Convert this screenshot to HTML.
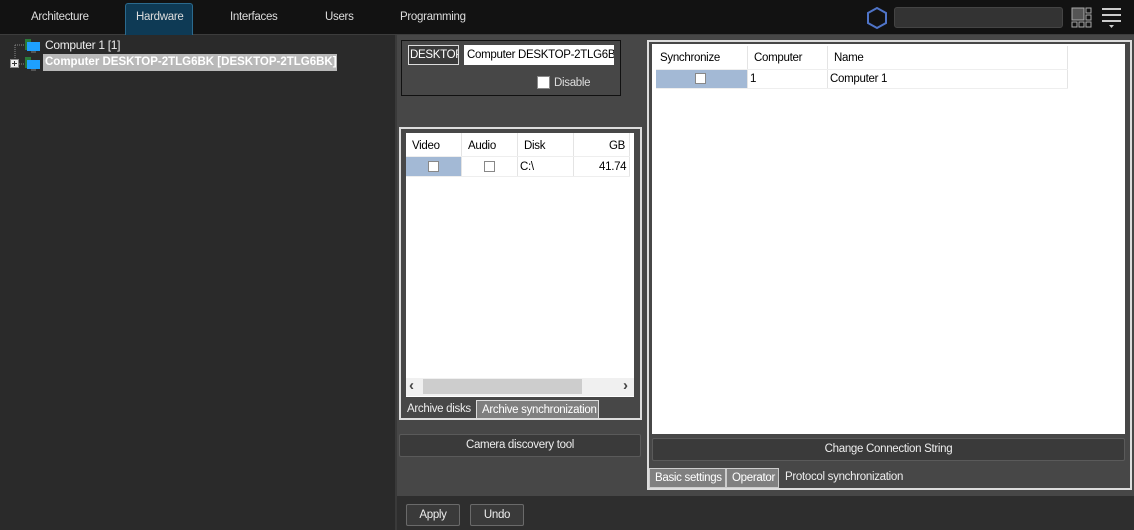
<!DOCTYPE html>
<html><head><meta charset="utf-8"><style>
*{margin:0;padding:0;box-sizing:border-box}
body{width:1134px;height:530px;overflow:hidden;background:#2a2a2a;font-family:"Liberation Sans",sans-serif;font-size:11.5px;letter-spacing:-0.3px;position:relative;color:#fff}
.a{position:absolute;white-space:nowrap;line-height:17px}
</style></head><body>
<div class="a" style="left:0;top:0;width:1134px;height:34px;background:#121212"></div>
<div class="a" style="left:0;top:34px;width:1134px;height:1px;background:#3c3c3c"></div>
<div class="a" style="left:125px;top:3px;width:68px;height:32px;background:#0e3a55;border:1px solid #2b6a8e;border-bottom:none;border-radius:3px 3px 0 0"></div>
<div class="a" style="left:31px;top:9px;color:#ddd">Architecture</div>
<div class="a" style="left:136px;top:9px;color:#ddd">Hardware</div>
<div class="a" style="left:230px;top:9px;color:#ddd">Interfaces</div>
<div class="a" style="left:325px;top:9px;color:#ddd">Users</div>
<div class="a" style="left:400px;top:9px;color:#ddd">Programming</div>
<svg class="a" style="left:866px;top:6px" width="22" height="24"><polygon points="11,2 20,7 20,17 11,22 2,17 2,7" fill="none" stroke="#4f74c8" stroke-width="2"/></svg>
<div class="a" style="left:894px;top:7px;width:169px;height:21px;background:#333;border:1px solid #444;border-radius:3px"></div>
<svg class="a" style="left:1071px;top:7px" width="22" height="22"><rect x="1" y="1" width="12" height="12" fill="#555" stroke="#aaa"/><rect x="15" y="1" width="5" height="5" fill="none" stroke="#aaa"/><rect x="15" y="8" width="5" height="5" fill="none" stroke="#aaa"/><rect x="1" y="15" width="5" height="5" fill="none" stroke="#aaa"/><rect x="8" y="15" width="5" height="5" fill="none" stroke="#aaa"/><rect x="15" y="15" width="5" height="5" fill="none" stroke="#aaa"/></svg>
<svg class="a" style="left:1102px;top:8px" width="20" height="22"><rect x="0" y="0" width="19" height="2" fill="#ccc"/><rect x="0" y="6" width="19" height="2" fill="#ccc"/><rect x="0" y="12" width="19" height="2" fill="#ccc"/><polygon points="7,17 12,17 9.5,20" fill="#ccc"/></svg>

<!-- tree -->
<svg class="a" style="left:8px;top:38px" width="36" height="34"><path d="M7 7 V26 M7 7 H16 M7 26 H16" stroke="#888" stroke-dasharray="1,1" fill="none"/><rect x="2.5" y="21.5" width="8" height="8" fill="#eee" stroke="#888"/><path d="M4 25.5h5M6.5 23v5" stroke="#333"/><rect x="17" y="1" width="6" height="11" fill="#2a7a3a"/><rect x="19" y="4" width="13" height="9" fill="#1ea0ff"/><rect x="23" y="13" width="5" height="2" fill="#555"/><rect x="17" y="19" width="6" height="11" fill="#2a7a3a"/><rect x="19" y="22" width="13" height="9" fill="#1ea0ff"/><rect x="23" y="31" width="5" height="2" fill="#555"/></svg>
<div class="a" style="left:45px;top:37px;font-size:12px;color:#eee">Computer 1 [1]</div>
<div class="a" style="left:43px;top:54px;height:17px;width:294px;background:#b9b9b9"></div>
<div class="a" style="left:45px;top:54px;font-weight:bold;color:#fff;font-size:11.5px;letter-spacing:0px">Computer DESKTOP-2TLG6BK [DESKTOP-2TLG6BK]</div>

<div class="a" style="left:395px;top:35px;width:2px;height:495px;background:#3a3a3a"></div>
<div class="a" style="left:397px;top:35px;width:737px;height:461px;background:#474747"></div>
<div class="a" style="left:397px;top:496px;width:737px;height:34px;background:#2e2e2e"></div>

<!-- box1 -->
<div class="a" style="left:401px;top:40px;width:220px;height:56px;border:1px solid #111"></div>
<div class="a" style="left:408px;top:45px;width:51px;height:20px;border:1px solid #ddd;background:#3a3a3a;overflow:hidden;padding:1px 1px">DESKTOP</div>
<div class="a" style="left:464px;top:45px;width:150px;height:20px;background:#fff;color:#000;padding:2px 3px;overflow:hidden">Computer DESKTOP-2TLG6BK</div>
<div class="a" style="left:537px;top:76px;width:13px;height:13px;background:#fff;border:1px solid #888"></div>
<div class="a" style="left:554px;top:75px;color:#ddd">Disable</div>

<!-- box2 -->
<div class="a" style="left:399px;top:127px;width:243px;height:293px;border:2px solid #ddd"></div>
<div class="a" style="left:406px;top:133px;width:228px;height:264px;background:#fff"></div>
<div class="a" style="left:406px;top:157px;width:56px;height:19px;background:#a3b9d5"></div>
<div class="a" style="left:461px;top:133px;width:1px;height:43px;background:#e4e4e4"></div>
<div class="a" style="left:517px;top:133px;width:1px;height:43px;background:#e4e4e4"></div>
<div class="a" style="left:573px;top:133px;width:1px;height:43px;background:#e4e4e4"></div>
<div class="a" style="left:629px;top:133px;width:1px;height:43px;background:#e4e4e4"></div>
<div class="a" style="left:406px;top:156px;width:224px;height:1px;background:#eee"></div>
<div class="a" style="left:406px;top:176px;width:224px;height:1px;background:#eee"></div>
<div class="a" style="left:412px;top:138px;color:#000">Video</div>
<div class="a" style="left:468px;top:138px;color:#000">Audio</div>
<div class="a" style="left:524px;top:138px;color:#000">Disk</div>
<div class="a" style="left:609px;top:138px;color:#000">GB</div>
<div class="a" style="left:428px;top:161px;width:11px;height:11px;background:#fff;border:1px solid #888"></div>
<div class="a" style="left:484px;top:161px;width:11px;height:11px;background:#fff;border:1px solid #888"></div>
<div class="a" style="left:520px;top:159px;color:#000">C:\</div>
<div class="a" style="left:599px;top:159px;color:#000">41.74</div>
<div class="a" style="left:406px;top:378px;width:228px;height:18px;background:#f0f0f0"></div>
<div class="a" style="left:423px;top:379px;width:159px;height:15px;background:#cdcdcd"></div>
<div class="a" style="left:409px;top:377px;color:#444;font-weight:bold;font-size:15px">‹</div>
<div class="a" style="left:623px;top:377px;color:#444;font-weight:bold;font-size:15px">›</div>
<div class="a" style="left:407px;top:401px;color:#eee">Archive disks</div>
<div class="a" style="left:476px;top:400px;width:123px;height:19px;background:#7f7f7f;border:1px solid #ddd;padding:1px 5px;color:#fff">Archive synchronization</div>
<div class="a" style="left:399px;top:434px;width:242px;height:23px;background:#3a3a3a;border:1px solid #5a5a5a;border-radius:2px;text-align:center;padding-top:2px;color:#eee">Camera discovery tool</div>

<!-- right -->
<div class="a" style="left:647px;top:40px;width:485px;height:450px;border:2px solid #ddd"></div>
<div class="a" style="left:652px;top:44px;width:473px;height:390px;background:#fff"></div>
<div class="a" style="left:656px;top:70px;width:92px;height:18px;background:#a3b9d5"></div>
<div class="a" style="left:747px;top:46px;width:1px;height:42px;background:#e4e4e4"></div>
<div class="a" style="left:827px;top:46px;width:1px;height:42px;background:#e4e4e4"></div>
<div class="a" style="left:1067px;top:46px;width:1px;height:42px;background:#e4e4e4"></div>
<div class="a" style="left:656px;top:69px;width:412px;height:1px;background:#eee"></div>
<div class="a" style="left:656px;top:88px;width:412px;height:1px;background:#eee"></div>
<div class="a" style="left:660px;top:50px;color:#000">Synchronize</div>
<div class="a" style="left:754px;top:50px;color:#000">Computer</div>
<div class="a" style="left:834px;top:50px;color:#000">Name</div>
<div class="a" style="left:695px;top:73px;width:11px;height:11px;background:#fff;border:1px solid #888"></div>
<div class="a" style="left:750px;top:71px;color:#000">1</div>
<div class="a" style="left:830px;top:71px;color:#000">Computer 1</div>
<div class="a" style="left:652px;top:438px;width:473px;height:23px;background:#3a3a3a;border:1px solid #5a5a5a;border-radius:2px;text-align:center;padding-top:2px;color:#eee">Change Connection String</div>
<div class="a" style="left:649px;top:468px;width:77px;height:20px;background:#808080;border:1px solid #ccc;padding:1px 5px">Basic settings</div>
<div class="a" style="left:726px;top:468px;width:53px;height:20px;background:#808080;border:1px solid #ccc;padding:1px 5px">Operator</div>
<div class="a" style="left:785px;top:469px;color:#eee">Protocol synchronization</div>

<div class="a" style="left:406px;top:504px;width:54px;height:22px;background:#3a3a3a;border:1px solid #6a6a6a;border-radius:2px;text-align:center;padding-top:2px;color:#eee">Apply</div>
<div class="a" style="left:470px;top:504px;width:54px;height:22px;background:#3a3a3a;border:1px solid #6a6a6a;border-radius:2px;text-align:center;padding-top:2px;color:#eee">Undo</div>
</body></html>
